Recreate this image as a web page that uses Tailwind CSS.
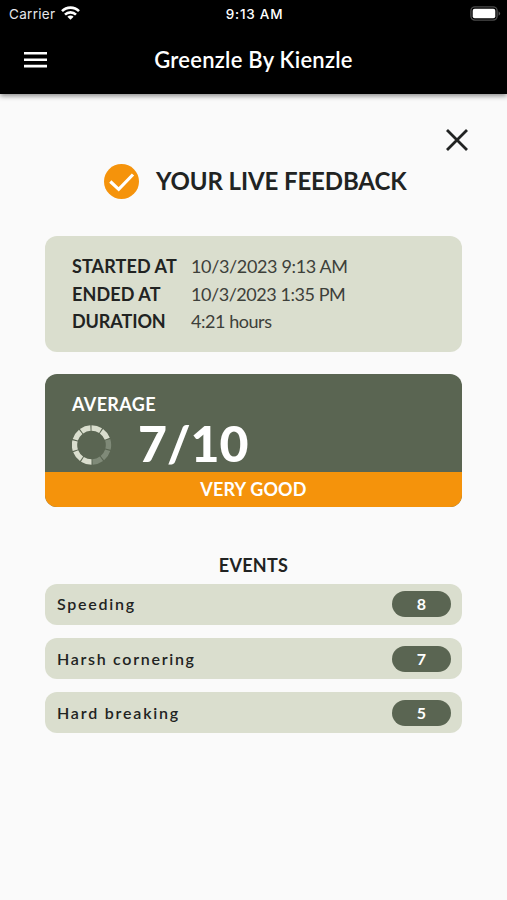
<!DOCTYPE html>
<html lang="en">
<head>
    <meta charset="UTF-8">
    <meta name="viewport" content="width=device-width, initial-scale=1.0">
    <title>Greenzle By Kienzle</title>
    <script src="https://cdn.jsdelivr.net/npm/@tailwindcss/browser@4"></script>
</head>
<body class="bg-[#fafafa] font-['Lato',sans-serif] text-[#212322] h-[900px] overflow-hidden">
    <header class="bg-black text-white h-[94px] shadow-[0_2px_5px_rgba(0,0,0,0.45)]">
        <!-- Status bar -->
        <div class="grid grid-cols-3 items-center h-7 pl-[9px] pr-[6px] font-['Inter',sans-serif] text-[13.5px]">
            <div class="flex items-center gap-[6px] text-gray-200">
                <span class="tracking-[0.3px]">Carrier</span>
                <svg class="w-[19px] h-[14px] -mt-[2px]" viewBox="0 0 19 14" fill="none" stroke="white" stroke-width="2.6">
                    <path d="M1 5.2a12 12 0 0 1 17 0M4 8.6a7.8 7.8 0 0 1 11 0"/>
                    <path d="M9.5 13.8L6.4 10.8a4.4 4.4 0 0 1 6.2 0z" fill="white" stroke="none"/>
                </svg>
            </div>
            <span class="text-center font-medium tracking-[0.75px] -ml-px">9:13 AM</span>
            <svg class="justify-self-end w-[31px] h-[15px] -mt-[2px]" viewBox="0 0 31 15">
                <rect x="0.9" y="0.9" width="26.2" height="13.2" rx="4" fill="none" stroke="#4b4b4b" stroke-width="1.4"/>
                <rect x="2.7" y="2.7" width="22.6" height="9.6" rx="2" fill="white"/>
                <path d="M28.6 5.2q3 2.3 0 4.6z" fill="#5b5b5b"/>
            </svg>
        </div>
        <!-- App bar -->
        <div class="grid grid-cols-[1fr_auto_1fr] items-center h-[63px] px-6">
            <svg class="w-[23px] h-4" viewBox="0 0 23 16" fill="white">
                <path d="M0 0h23v2.6H0zM0 6.4h23V9H0zM0 12.8h23v2.6H0z"/>
            </svg>
            <h1 class="text-[22px] leading-8 font-semibold tracking-[0.25px]">Greenzle By Kienzle</h1>
        </div>
    </header>

    <main class="px-[45px] pt-[35px]">
        <div class="flex justify-end">
            <svg class="w-[22px] h-[22px] -mr-[6px]" viewBox="0 0 22 22" stroke="#212322" stroke-width="2.8">
                <path d="M1 1l20 20M21 1L1 21"/>
            </svg>
        </div>
        <div class="flex items-center mt-[12px] pl-[59px] h-9 whitespace-nowrap">
            <svg class="w-[35px] h-[35px]" viewBox="0 0 35 35">
                <circle cx="17.5" cy="17.5" r="17.5" fill="#f5930b"/>
                <path d="M6.3 17.5l8.4 7.8L29 10.5" fill="none" stroke="white" stroke-width="3.2"/>
            </svg>
            <h2 class="ml-[17px] text-[24px] font-bold tracking-[-0.1px]">YOUR LIVE FEEDBACK</h2>
        </div>

        <section class="mt-[37px] h-[116px] w-[417px] rounded-xl bg-[#dadece] pt-[17px] pl-[27px] grid grid-cols-[119px_1fr] auto-rows-[27.7px] content-start text-[18px] leading-[27.7px] whitespace-nowrap">
            <span class="font-bold tracking-[0.1px]">STARTED AT</span>
            <span class="text-[#3d403a] tracking-[-0.35px]">10/3/2023 9:13 AM</span>
            <span class="font-bold tracking-[0.1px]">ENDED AT</span>
            <span class="text-[#3d403a] tracking-[-0.45px]">10/3/2023 1:35 PM</span>
            <span class="font-bold tracking-[-0.1px]">DURATION</span>
            <span class="text-[#3d403a] tracking-[-0.45px]">4:21 hours</span>
        </section>

        <section class="mt-[22px] w-[417px] rounded-xl overflow-hidden bg-[#5a6552] text-white">
            <div class="h-[97.5px] pt-[18px] pl-[27px]">
                <h3 class="text-[18px] leading-6 font-bold tracking-[0.35px]">AVERAGE</h3>
                <div class="flex items-center h-[58px]">
                    <svg class="w-10 h-10" viewBox="0 0 40 40" fill="none" stroke-width="5.4">
                        <g transform="rotate(90 19.5 20)">
                            <circle cx="19.5" cy="20" r="17" stroke="#7f8a78" pathLength="100" stroke-dasharray="0 70 9 1 9 1 9 1"/>
                            <circle cx="19.5" cy="20" r="17" stroke="#dadece" pathLength="100" stroke-dasharray="9 1 9 1 9 1 9 1 9 1 9 1 9 31"/>
                        </g>
                    </svg>
                    <span class="ml-[26px] -mt-[4px] text-[50px] leading-none font-black">7/10</span>
                </div>
            </div>
            <div class="h-[35px] bg-[#f5930b] flex items-center justify-center text-[18px] font-bold tracking-[0.15px]">VERY GOOD</div>
        </section>

        <h3 class="mt-[46px] text-center text-[18px] leading-6 font-bold tracking-[0.3px]">EVENTS</h3>
        <ul class="mt-[7.5px] w-[417px] space-y-[13.5px] text-[16px] font-semibold">
            <li class="flex items-center justify-between h-[40.7px] rounded-xl bg-[#dadece] pl-3 pr-[11px]">
                <span class="tracking-[1.75px]">Speeding</span>
                <span class="w-[59px] h-[26px] rounded-full bg-[#5a6552] text-white font-bold flex items-center justify-center">8</span>
            </li>
            <li class="flex items-center justify-between h-[40.7px] rounded-xl bg-[#dadece] pl-3 pr-[11px]">
                <span class="tracking-[1.7px]">Harsh cornering</span>
                <span class="w-[59px] h-[26px] rounded-full bg-[#5a6552] text-white font-bold flex items-center justify-center">7</span>
            </li>
            <li class="flex items-center justify-between h-[40.7px] rounded-xl bg-[#dadece] pl-3 pr-[11px]">
                <span class="tracking-[1.8px]">Hard breaking</span>
                <span class="w-[59px] h-[26px] rounded-full bg-[#5a6552] text-white font-bold flex items-center justify-center">5</span>
            </li>
        </ul>
    </main>
</body>
</html>
